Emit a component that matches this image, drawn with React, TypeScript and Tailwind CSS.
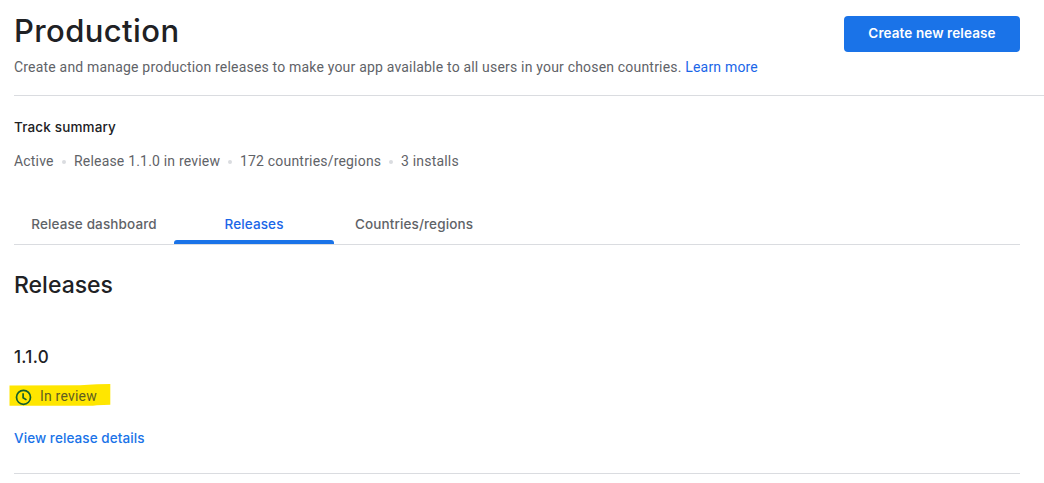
const display = "font-['Inter','Roboto',sans-serif]";

const summary = [
  { text: 'Active', className: 'w-[40px]' },
  { text: 'Release 1.1.0 in review', className: 'w-[146px]' },
  { text: '172 countries/regions', className: 'w-[141px]' },
  { text: '3 installs', className: 'w-[60px]' },
];

function Header() {
  return (
    <header className="ml-[14px] flex h-24 justify-between border-b border-[#dadce0] pr-6">
      <div>
        <h1 className={`${display} mt-[11px] h-10 text-[31px] leading-10 font-[450] tracking-[0.4px] text-[#202124]`}>Production</h1>
        <p className="mt-[6px] text-sm leading-5 tracking-[0.19px] text-[#5f6368]">
          Create and manage production releases to make your app available to all users in your chosen countries.{' '}
          <a className="text-[#1a66e8]">Learn more</a>
        </p>
      </div>
      <button className={`${display} mt-4 h-9 w-44 rounded-[4px] bg-[#1a73e8] pb-px text-[13.5px] font-semibold tracking-[0.1px] text-white`}>
        Create new release
      </button>
    </header>
  );
}

function TrackSummary() {
  return (
    <section className="pl-[14px]">
      <h2 className={`${display} mt-[21px] text-[13.5px] leading-5 font-medium tracking-[0.15px] text-[#202124]`}>Track summary</h2>
      <div className="mt-[14px] flex h-5 items-center text-sm leading-5 tracking-[0.19px] text-[#5f6368]">
        {summary.map((item, i) => (
          <div key={item.text} className="flex items-center">
            {i > 0 && <span className="mt-[2px] mr-2 ml-2 size-1 rounded-full bg-[#dadce0]" />}
            <span className={`${item.className} whitespace-nowrap`}>{item.text}</span>
          </div>
        ))}
      </div>
    </section>
  );
}

function Tabs() {
  return (
    <nav className={`${display} mt-[33px] mr-6 ml-[14px] flex h-[41px] border-b border-[#dadce0] text-[13.5px] font-medium tracking-[0.12px] text-[#5f6368]`}>
      <div className="flex w-40 justify-center pt-[10px] leading-5">
        <span>Release dashboard</span>
      </div>
      <div className="flex w-40 flex-col items-center justify-between pt-[10px] leading-5 text-[#1a66e8]">
        <span>Releases</span>
        <span className="h-1 w-full rounded-t-[3px] bg-[#1a73e8]" />
      </div>
      <div className="flex w-40 justify-center pt-[10px] leading-5">
        <span>Countries/regions</span>
      </div>
    </nav>
  );
}

function ReviewStatus() {
  return (
    <div className="relative mt-[14px] flex h-[22px] w-[110px] items-center text-sm leading-5">
      <svg className="absolute top-0 left-0" width="112" height="24" viewBox="0 0 112 24">
        <path d="M9.5 2.5 80 2.3 97 1.2 110.3 1V21.7L97 22.3 93 22.8H9.5Z" fill="#ffe600" />
      </svg>
      <svg className="relative mt-[7px] ml-[15px] shrink-0" width="17" height="17" viewBox="0 0 17 17" fill="none" stroke="#14602b" strokeWidth="1.7">
        <circle cx="8.5" cy="8.3" r="7" />
        <path d="M8.1 4.2v4.5l3.4 2.2" />
      </svg>
      <span className="relative mt-[4px] ml-2 tracking-[0.2px] whitespace-nowrap text-[#5f5d20]">In review</span>
    </div>
  );
}

export default function App() {
  return (
    <main className="h-[483px] w-[1044px] overflow-hidden bg-white font-['Roboto',sans-serif]">
      <Header />
      <TrackSummary />
      <Tabs />
      <section>
        <h2 className={`${display} mt-6 ml-[14px] h-8 text-[23px] leading-8 font-[450] text-[#202124]`}>Releases</h2>
        <div className="mr-6 h-[173px]">
          <h3 className={`${display} mt-[44px] ml-[14px] h-6 text-[17px] leading-6 font-medium tracking-[0.3px] text-[#202124]`}>1.1.0</h3>
          <ReviewStatus />
          <a className={`${display} mt-[23px] ml-[14px] block text-[13.5px] leading-5 font-medium tracking-[0.08px] text-[#1a73e8]`}>View release details</a>
          <div className="mt-[25px] ml-[14px] h-px bg-[#dadce0]" />
        </div>
      </section>
    </main>
  );
}
